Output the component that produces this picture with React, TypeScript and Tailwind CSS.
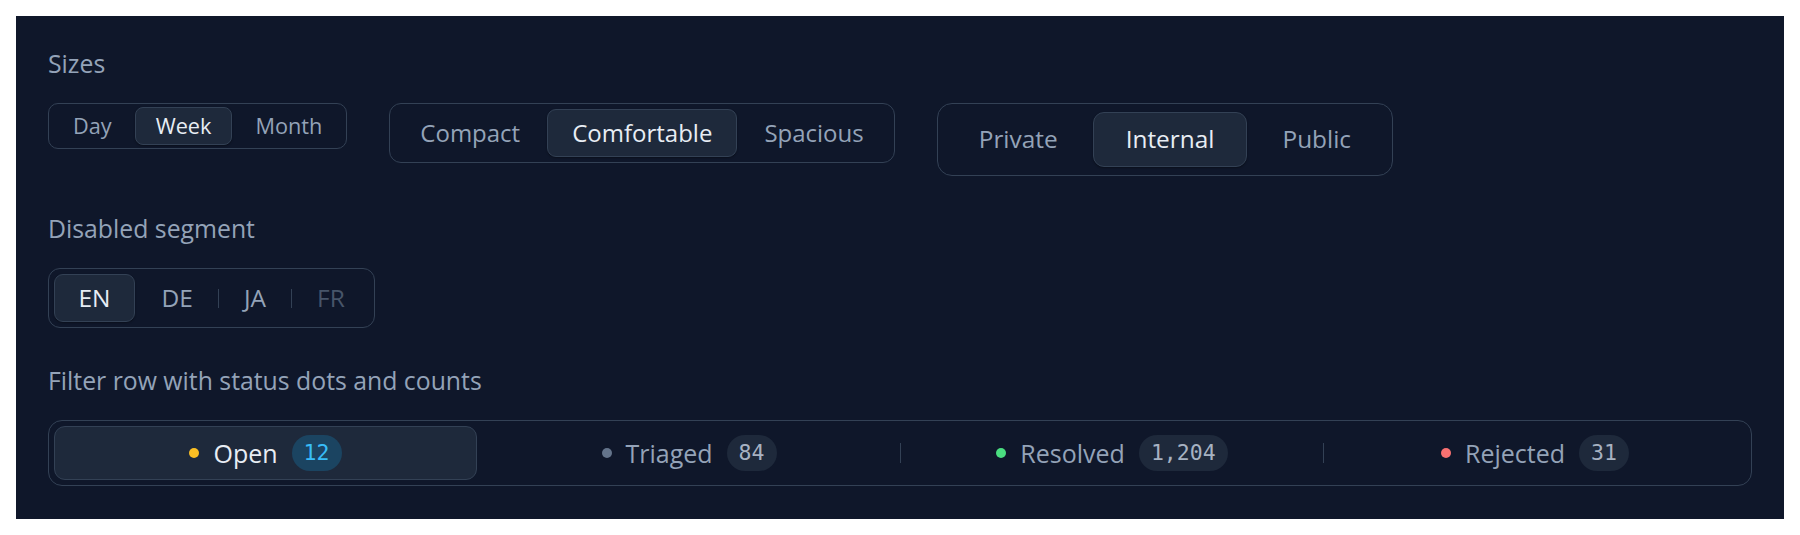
import { useState } from "react";

type SegSize = "sm" | "md" | "lg";

const boxBySize: Record<SegSize, string> = {
	sm: "rounded-[10px] p-[3px] gap-[2px]",
	md: "rounded-[12px] p-[5px] gap-[2px]",
	lg: "rounded-[15px] p-[8px] gap-[2px]",
};

const itemBySize: Record<SegSize, string> = {
	sm: "h-[38px] px-5 text-[21.7px] rounded-[8px]",
	md: "h-[48px] px-6 text-[24px] rounded-[9px]",
	lg: "h-[55px] px-8 text-[24.4px] rounded-[11px]",
};

function Segmented({
	options,
	initial,
	size,
}: {
	options: string[];
	initial: string;
	size: SegSize;
}) {
	const [value, setValue] = useState(initial);
	return (
		<div
			className={`flex items-center border border-[#334155] bg-[#0f172a] ${boxBySize[size]}`}
		>
			{options.map((opt) => {
				const active = opt === value;
				return (
					<button
						key={opt}
						type="button"
						onClick={() => setValue(opt)}
						className={`flex items-center justify-center border leading-none ${itemBySize[size]} ${
							active
								? "border-[#334155] bg-[#1e293b] text-[#e8edf4] shadow-[0_1px_2px_rgba(0,0,0,0.35)]"
								: "border-transparent text-[#94a3b8]"
						}`}
					>
						{opt}
					</button>
				);
			})}
		</div>
	);
}

function LanguageSegment() {
	const [value, setValue] = useState("EN");
	const langs = [
		{ code: "EN", disabled: false },
		{ code: "DE", disabled: false },
		{ code: "JA", disabled: false },
		{ code: "FR", disabled: true },
	];
	return (
		<div className="flex items-center self-start rounded-[12px] border border-[#334155] p-[5px]">
			{langs.map((l, i) => {
				const active = l.code === value;
				const prevActive = i > 0 && langs[i - 1].code === value;
				return (
					<div key={l.code} className="flex items-center">
						{i > 0 && (
							<div className="flex w-[2px] justify-center">
								<span
									className={`h-[19px] w-px ${
										active || prevActive ? "bg-transparent" : "bg-[#334155]"
									}`}
								/>
							</div>
						)}
						<button
							type="button"
							disabled={l.disabled}
							onClick={() => setValue(l.code)}
							className={`flex h-[48px] items-center justify-center rounded-[9px] border px-[23.5px] text-[24.5px] leading-none ${
								active
									? "border-[#334155] bg-[#1e293b] text-[#e8edf4] shadow-[0_1px_2px_rgba(0,0,0,0.35)]"
									: l.disabled
										? "cursor-not-allowed border-transparent text-[#475569]"
										: "border-transparent text-[#94a3b8]"
							}`}
						>
							{l.code}
						</button>
					</div>
				);
			})}
		</div>
	);
}

const filters = [
	{ label: "Open", count: "12", dot: "bg-[#fbbf24]" },
	{ label: "Triaged", count: "84", dot: "bg-[#64748b]" },
	{ label: "Resolved", count: "1,204", dot: "bg-[#4ade80]" },
	{ label: "Rejected", count: "31", dot: "bg-[#f87171]" },
];

function FilterRow() {
	const [value, setValue] = useState("Open");
	return (
		<div className="flex items-center rounded-[14px] border border-[#334155] p-[5px]">
			{filters.map((f, i) => {
				const active = f.label === value;
				const prevActive = i > 0 && filters[i - 1].label === value;
				return (
					<div key={f.label} className="flex flex-1 items-center">
						{i > 0 && (
							<span
								className={`h-[20px] w-px shrink-0 ${
									active || prevActive ? "bg-transparent" : "bg-[#334155]"
								}`}
							/>
						)}
						<button
							type="button"
							onClick={() => setValue(f.label)}
							className={`flex h-[54px] flex-1 items-center justify-center gap-[14px] rounded-[11px] border text-[25px] leading-none ${
								active
									? "border-[#334155] bg-[#1e293b] text-[#e8edf4]"
									: "border-transparent text-[#94a3b8]"
							}`}
						>
							<span className={`h-[10px] w-[10px] rounded-full ${f.dot}`} />
							<span>{f.label}</span>
							<span
								className={`flex h-[36px] items-center rounded-full px-3 font-['DejaVu_Sans_Mono',monospace] text-[21.5px] ${
									active
										? "bg-[#1b4461] text-[#38bdf8]"
										: "bg-[#1e293b] text-[#a7b2c2]"
								}`}
							>
								{f.count}
							</span>
						</button>
					</div>
				);
			})}
		</div>
	);
}

export default function App() {
	return (
		<div className="min-h-screen bg-white p-4 font-['Open_Sans',sans-serif]">
			<div className="flex flex-col gap-[37px] bg-[#0f172a] px-8 pt-8 pb-[33px]">
				<section>
					<h3 className="mb-[25px] text-[24.8px] leading-[30px] font-normal text-[#94a3b8]">
						Sizes
					</h3>
					<div className="flex items-start gap-[42px]">
						<Segmented size="sm" options={["Day", "Week", "Month"]} initial="Week" />
						<Segmented
							size="md"
							options={["Compact", "Comfortable", "Spacious"]}
							initial="Comfortable"
						/>
						<Segmented
							size="lg"
							options={["Private", "Internal", "Public"]}
							initial="Internal"
						/>
					</div>
				</section>

				<section className="flex flex-col">
					<h3 className="mb-[25px] text-[24.8px] leading-[30px] font-normal text-[#94a3b8]">
						Disabled segment
					</h3>
					<LanguageSegment />
				</section>

				<section>
					<h3 className="mb-[25px] text-[24.8px] leading-[30px] font-normal text-[#94a3b8]">
						Filter row with status dots and counts
					</h3>
					<FilterRow />
				</section>
			</div>
		</div>
	);
}
